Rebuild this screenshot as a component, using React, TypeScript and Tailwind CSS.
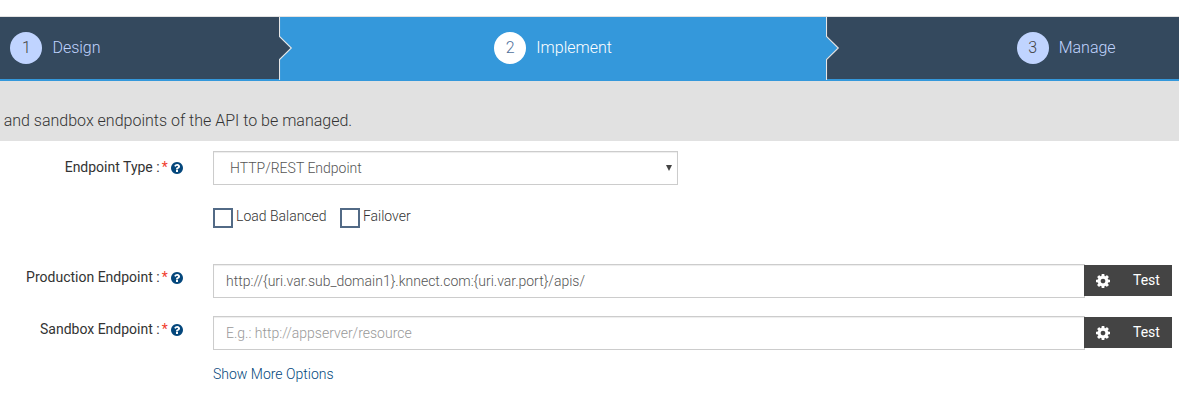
import React from 'react';

const COG =
  'M1024 896q0-106-75-181t-181-75-181 75-75 181 75 181 181 75 181-75 75-181zm512-109v222q0 12-8 23t-20 13l-185 28q-19 54-39 91 35 50 107 138 10 12 10 25t-9 23q-27 37-99 108t-94 71q-12 0-26-9l-138-108q-44 23-91 38-16 136-29 186-7 28-36 28h-222q-14 0-24.5-8.5t-11.5-21.5l-28-184q-49-16-90-37l-141 107q-10 9-25 9-14 0-25-11-126-114-165-168-7-10-7-23 0-12 8-23 15-21 51-66.5t54-70.5q-27-50-41-99l-183-27q-13-2-21-12.5t-8-23.5v-222q0-12 8-23t19-13l186-28q14-46 39-92-40-57-107-138-10-12-10-24 0-10 9-23 26-36 98.5-107.5t94.5-71.5q13 0 26 10l138 107q44-23 91-38 16-136 29-186 7-28 36-28h222q14 0 24.5 8.5t11.5 21.5l28 184q49 16 90 37l142-107q9-9 24-9 13 0 25 10 129 119 165 170 7 8 7 22 0 12-8 23-15 21-51 66.5t-54 70.5q26 50 41 98l183 28q13 2 21 12.5t8 23.5z';

const HELP =
  'M1024 1376v-192q0-14-9-23t-23-9h-192q-14 0-23 9t-9 23v192q0 14 9 23t23 9h192q14 0 23-9t9-23zm256-672q0-88-55.5-163t-138.5-116-170-41q-243 0-371 213-15 24 8 42l132 100q7 6 19 6 16 0 25-12 53-68 86-92 34-24 86-24 48 0 85.5 26t37.5 59q0 38-20 61t-68 45q-63 28-115.5 86.5t-52.5 125.5v36q0 14 9 23t23 9h192q14 0 23-9t9-23q0-19 21.5-49.5t54.5-49.5q32-18 49-28.5t46-35 44.5-48 28-60.5 12.5-81zm384 192q0 209-103 385.5t-279.5 279.5-385.5 103-385.5-103-279.5-279.5-103-385.5 103-385.5 279.5-279.5 385.5-103 385.5 103 279.5 279.5 103 385.5z';

function Step({ n, label, active }: { n: number; label: string; active?: boolean }) {
  return (
    <div className="flex items-center text-base">
      <span
        className={
          active
            ? 'flex size-8 items-center justify-center rounded-full bg-white text-[#4f709b]'
            : 'flex size-8 items-center justify-center rounded-full bg-[#c0d4ff] text-[#444]'
        }
      >
        {n}
      </span>
      <span className={active ? 'ml-2.5 text-white' : 'ml-2.5 text-[#c0d4ff]'}>{label}</span>
    </div>
  );
}

function Notch({ fill }: { fill: string }) {
  return (
    <svg className="absolute top-0 left-full h-16 w-3.5" viewBox="0 0 14 64">
      <path d="M0 19.5L12 31L0 42.5Z" fill={fill} />
      <path d="M0.5 0V19.5L12.3 31L0.5 42.5V63" fill="none" stroke="#e6e6e6" strokeWidth="1.1" />
    </svg>
  );
}

function Label({ text }: { text: string }) {
  return (
    <div className="flex h-5 w-[183px] shrink-0 items-center justify-end font-normal text-[#333]">
      <span className="whitespace-pre">{text} :</span>
      <span className="ml-0.5 text-[#f03c2e]">*</span>
      <svg className="mt-0.5 ml-[3.3px] size-3" viewBox="128 128 1536 1536" fill="#04477c">
        <path d={HELP} />
      </svg>
    </div>
  );
}

function Check({ label }: { label: string }) {
  return (
    <label className="flex h-5">
      <span className="size-5 border-2 border-[#526a86] bg-white" />
      <span className="-mt-0.5 ml-[3px] leading-5">{label}</span>
    </label>
  );
}

function EndpointRow({ label, value, placeholder }: { label: string; value?: string; placeholder?: string }) {
  return (
    <div className="flex h-[34px]">
      <div className="pt-[3px]">
        <Label text={label} />
      </div>
      <input
        className="ml-[30px] h-[34px] w-[872px] border border-[#ccc] px-3 text-[#555] shadow-[inset_0_1px_1px_rgba(0,0,0,0.075)] outline-none placeholder:text-[#999]"
        defaultValue={value}
        placeholder={placeholder}
      />
      <button className="-ml-px mt-px flex h-[31px] w-[88px] items-center bg-[#444] pb-px font-normal text-white">
        <svg className="mt-px ml-3 size-3.5" viewBox="0 128 1536 1536" fill="currentColor">
          <path d={COG} />
        </svg>
        <span className="ml-[23px] leading-5">Test</span>
      </button>
    </div>
  );
}

export default function App() {
  return (
    <div className="h-[407px] w-[1179px] overflow-hidden bg-white pt-4 font-[Roboto,sans-serif] text-sm font-light text-[#333]">
      <nav className="flex h-[65px] border-t border-[#e2e2e2]">
        <div className="relative z-20 flex w-[279px] items-center border-b-2 border-[#3498db] bg-[#34495e] pl-[10.4px]">
          <Step n={1} label="Design" />
          <Notch fill="#34495e" />
        </div>
        <div className="relative z-10 flex w-[547px] items-center border-b-2 border-[#3498db] bg-[#3498db] pl-[215.3px]">
          <Step n={2} label="Implement" active />
          <Notch fill="#3498db" />
        </div>
        <div className="flex flex-1 items-center border-b-2 border-[#3498db] bg-[#34495e] pl-[190.7px]">
          <Step n={3} label="Manage" />
        </div>
      </nav>
      <p className="h-[60px] bg-[#e1e1e1] pt-7 pl-[3.7px] text-base">and sandbox endpoints of the API to be managed.</p>
      <main>
        <div className="mt-2.5 flex h-[34px]">
          <div className="pt-1.5">
            <Label text="Endpoint Type" />
          </div>
          <div className="ml-[30px] flex w-[465px] items-center justify-between border border-[#ccc] pr-[5px] pl-4 text-[#555] shadow-[inset_0_1px_1px_rgba(0,0,0,0.075)]">
            <span>HTTP/REST Endpoint</span>
            <svg className="h-1.5 w-1.5" viewBox="0 0 6 6" fill="#444">
              <path d="M0 0H6L3 6Z" />
            </svg>
          </div>
        </div>
        <div className="mt-[23px] ml-[213px] flex gap-[13.3px]">
          <Check label="Load Balanced" />
          <Check label="Failover" />
        </div>
        <div className="mt-9 flex flex-col gap-[18px]">
          <EndpointRow label="Production Endpoint" value="http://{uri.var.sub_domain1}.knnect.com:{uri.var.port}/apis/" />
          <EndpointRow label="Sandbox Endpoint" placeholder="E.g.: http://appserver/resource" />
        </div>
        <a className="mt-3.5 ml-[213px] block w-fit leading-5 text-[#04477c]">Show More Options</a>
      </main>
    </div>
  );
}
